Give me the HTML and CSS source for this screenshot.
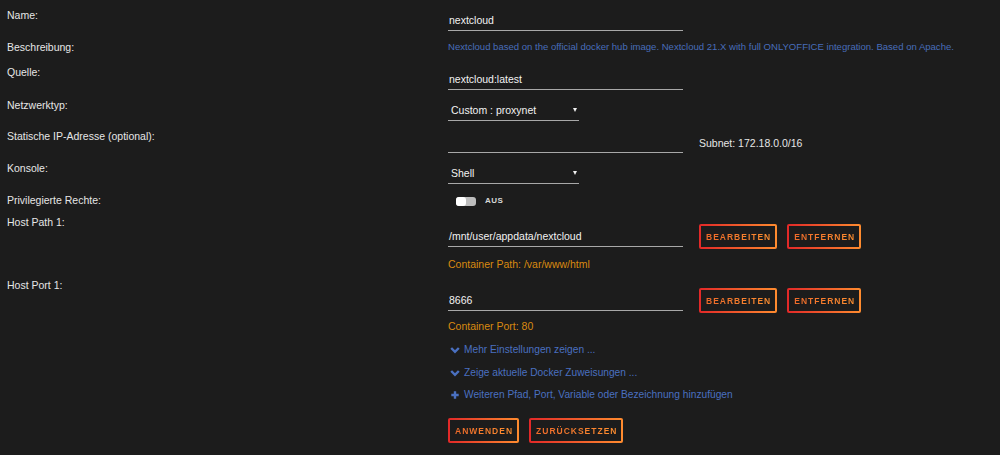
FILE: index.html
```html
<!DOCTYPE html>
<html lang="de">
<head>
<meta charset="utf-8">
<title>Docker Container</title>
<link rel="stylesheet" href="styles.css">
</head>
<body>
<form class="form">
  <div class="row r-name">
    <div class="label">Name:</div>
    <div class="field"><div class="input">nextcloud</div></div>
  </div>
  <div class="row r-desc">
    <div class="label">Beschreibung:</div>
    <div class="field"><div class="desc">Nextcloud based on the official docker hub image. Nextcloud 21.X with full ONLYOFFICE integration. Based on Apache.</div></div>
  </div>
  <div class="row r-src">
    <div class="label">Quelle:</div>
    <div class="field"><div class="input">nextcloud:latest</div></div>
  </div>
  <div class="row r-net">
    <div class="label">Netzwerktyp:</div>
    <div class="field"><div class="select">Custom : proxynet<span class="caret"></span></div></div>
  </div>
  <div class="row r-ip">
    <div class="label">Statische IP-Adresse (optional):</div>
    <div class="field inline"><div class="input"></div><span class="subnet">Subnet: 172.18.0.0/16</span></div>
  </div>
  <div class="row r-con">
    <div class="label">Konsole:</div>
    <div class="field"><div class="select">Shell<span class="caret"></span></div></div>
  </div>
  <div class="row r-priv">
    <div class="label">Privilegierte Rechte:</div>
    <div class="field inline"><span class="switch"><span class="knob"></span></span><span class="switch-text">AUS</span></div>
  </div>
  <div class="row r-path">
    <div class="label">Host Path 1:</div>
    <div class="field">
      <div class="inline">
        <div class="input">/mnt/user/appdata/nextcloud</div>
        <button type="button" class="btn first"><span>BEARBEITEN</span></button>
        <button type="button" class="btn"><span>ENTFERNEN</span></button>
      </div>
      <div class="hint hint-path">Container Path: /var/www/html</div>
    </div>
  </div>
  <div class="row r-port">
    <div class="label">Host Port 1:</div>
    <div class="field">
      <div class="inline">
        <div class="input">8666</div>
        <button type="button" class="btn first"><span>BEARBEITEN</span></button>
        <button type="button" class="btn"><span>ENTFERNEN</span></button>
      </div>
      <div class="hint hint-port">Container Port: 80</div>
    </div>
  </div>
  <div class="row r-links">
    <div class="label"></div>
    <div class="field">
      <a class="link"><svg viewBox="0 0 10 10" class="ico"><path d="M1.2 3 L5 6.8 L8.8 3" fill="none" stroke="currentColor" stroke-width="2.4"/></svg>Mehr Einstellungen zeigen ...</a>
      <a class="link"><svg viewBox="0 0 10 10" class="ico"><path d="M1.2 3 L5 6.8 L8.8 3" fill="none" stroke="currentColor" stroke-width="2.4"/></svg>Zeige aktuelle Docker Zuweisungen ...</a>
      <a class="link"><svg viewBox="0 0 10 10" class="ico"><path d="M5 1.3 V8.7 M1.3 5 H8.7" fill="none" stroke="currentColor" stroke-width="2.4"/></svg>Weiteren Pfad, Port, Variable oder Bezeichnung hinzufügen</a>
    </div>
  </div>
  <div class="row r-actions">
    <div class="label"></div>
    <div class="field inline">
      <button type="button" class="btn"><span>ANWENDEN</span></button>
      <button type="button" class="btn"><span>ZURÜCKSETZEN</span></button>
    </div>
  </div>
</form>
</body>
</html>
```

FILE: styles.css
```css
html, body {
  margin: 0;
  padding: 0;
  background: #1c1c1c;
}
body {
  font-family: "Liberation Sans", Arial, sans-serif;
  font-size: 10.5px;
  color: #e2e2e2;
}
.form {
  padding-left: 7px;
}
.row {
  display: grid;
  grid-template-columns: 441px 1fr;
  align-items: start;
}
.label {
  line-height: 14px;
  color: #e6e6e6;
}
.field {
  line-height: 14px;
}
.inline {
  display: flex;
  align-items: center;
}
.input {
  box-sizing: border-box;
  width: 235px;
  height: 21px;
  line-height: 20px;
  border-bottom: 1px solid #a8a8a8;
  color: #f2f2f2;
  padding-left: 1px;
}
.select {
  box-sizing: border-box;
  width: 131px;
  height: 21px;
  line-height: 20px;
  border-bottom: 1px solid #a8a8a8;
  color: #f2f2f2;
  padding-left: 3px;
  position: relative;
}
.caret {
  position: absolute;
  right: 2px;
  top: 8px;
  border-left: 2.5px solid transparent;
  border-right: 2.5px solid transparent;
  border-top: 4px solid #f0f0f0;
}
.desc {
  color: #486dba;
  white-space: nowrap;
  font-size: 9.55px;
}
.subnet {
  margin-left: 16px;
  color: #e6e6e6;
}
.r-name { height: 36px; }
.r-name .label { padding-top: 8px; }
.r-name .field { padding-top: 10px; }
.r-desc { height: 24px; }
.r-desc .label, .r-desc .field { padding-top: 4px; }
.r-src { height: 34px; }
.r-src .label { padding-top: 5px; }
.r-src .field { padding-top: 9px; }
.r-net { height: 31px; }
.r-net .label { padding-top: 4px; }
.r-net .field { padding-top: 6px; }
.r-ip { height: 31px; }
.r-ip .label { padding-top: 4px; }
.r-ip .field { padding-top: 7px; }
.r-con { height: 31px; }
.r-con .label { padding-top: 5px; }
.r-con .field { padding-top: 7px; }
.r-priv { height: 25px; }
.r-priv .label { padding-top: 6px; }
.r-priv .field { padding-top: 7px; padding-left: 8px; }
.r-path { height: 63px; }
.r-path .label { padding-top: 3px; }
.r-path .field { padding-top: 12px; }
.r-port { height: 63px; }
.r-port .label { padding-top: 3px; }
.r-port .field { padding-top: 13px; }
.hint {
  color: #d98a10;
}
.hint-path { margin-top: 8px; }
.hint-port { margin-top: 6px; }
.r-links .field {
  display: flex;
  flex-direction: column;
  gap: 8.5px;
  padding-top: 5px;
}
.link {
  display: flex;
  align-items: center;
  color: #4a70c0;
  line-height: 14px;
  font-size: 10.2px;
}
.ico {
  width: 10px;
  height: 10px;
  margin: 0 4px 0 2px;
  color: #4a70c0;
}
.r-actions .field {
  padding-top: 16px;
  gap: 10px;
}
.switch {
  width: 20px;
  height: 9px;
  border-radius: 3px;
  background: #bdbdbd;
  position: relative;
  display: inline-block;
}
.knob {
  position: absolute;
  left: 0;
  top: 0;
  width: 10px;
  height: 9px;
  border-radius: 3px;
  background: #ffffff;
}
.switch-text {
  margin-left: 9px;
  font-size: 8px;
  font-weight: bold;
  letter-spacing: 0.5px;
  color: #d8d8d8;
}
.btn {
  box-sizing: border-box;
  height: 25px;
  padding: 0 4px 0 5px;
  border: 2px solid transparent;
  border-radius: 2px;
  background:
    linear-gradient(#1c1c1c, #1c1c1c) padding-box,
    linear-gradient(90deg, #e22828, #ff8c2f) border-box;
  font-family: "Liberation Sans", Arial, sans-serif;
  font-size: 8.5px;
  font-weight: bold;
  letter-spacing: 1px;
  cursor: pointer;
}
.btn span {
  background: linear-gradient(90deg, #ee6a2a, #ff8f30);
  -webkit-background-clip: text;
  background-clip: text;
  color: transparent;
}
.btn.first { margin-left: 16px; }
.btn + .btn { margin-left: 10px; }
.r-actions .btn + .btn { margin-left: 0; }
```
